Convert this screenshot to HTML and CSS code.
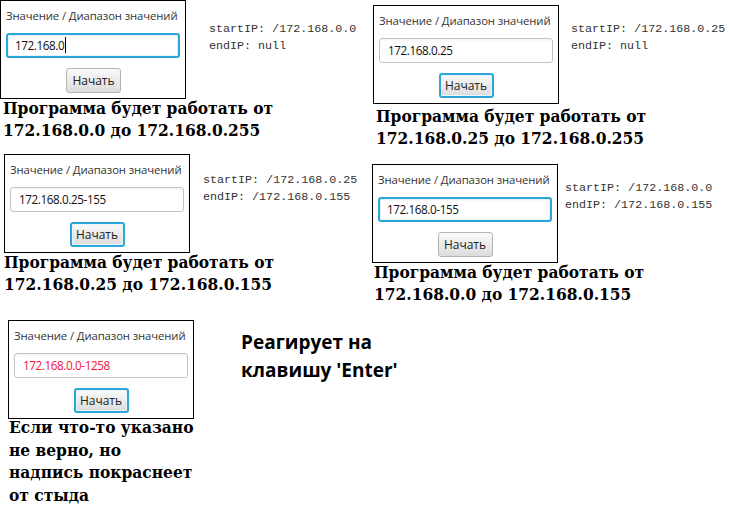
FILE: index.html
```html
<!DOCTYPE html>
<html lang="ru">
<head>
<meta charset="utf-8">
<title>IP range</title>
<link rel="stylesheet" href="styles.css">
</head>
<body>
<main class="canvas">

  <section class="shot s1">
    <div class="col">
      <div class="panel">
        <div class="label">Значение / Диапазон значений</div>
        <div class="field focused"><span class="caret">172.168.0</span></div>
        <div class="btn-row"><span class="btn">Начать</span></div>
      </div>
      <p class="caption">Программа будет работать от<br>172.168.0.0 до 172.168.0.255</p>
    </div>
    <pre class="log">startIP: /172.168.0.0
endIP: null</pre>
  </section>

  <section class="shot s2">
    <div class="col">
      <div class="panel">
        <div class="label">Значение / Диапазон значений</div>
        <div class="field">172.168.0.25</div>
        <div class="btn-row"><span class="btn focused">Начать</span></div>
      </div>
      <p class="caption">Программа будет работать от<br>172.168.0.25 до 172.168.0.255</p>
    </div>
    <pre class="log">startIP: /172.168.0.25
endIP: null</pre>
  </section>

  <section class="shot s3">
    <div class="col">
      <div class="panel">
        <div class="label">Значение / Диапазон значений</div>
        <div class="field">172.168.0.25-155</div>
        <div class="btn-row"><span class="btn focused">Начать</span></div>
      </div>
      <p class="caption">Программа будет работать от<br>172.168.0.25 до 172.168.0.155</p>
    </div>
    <pre class="log">startIP: /172.168.0.25
endIP: /172.168.0.155</pre>
  </section>

  <section class="shot s4">
    <div class="col">
      <div class="panel">
        <div class="label">Значение / Диапазон значений</div>
        <div class="field focused">172.168.0-155</div>
        <div class="btn-row"><span class="btn">Начать</span></div>
      </div>
      <p class="caption">Программа будет работать от<br>172.168.0.0 до 172.168.0.155</p>
    </div>
    <pre class="log">startIP: /172.168.0.0
endIP: /172.168.0.155</pre>
  </section>

  <section class="shot s5">
    <div class="col">
      <div class="panel">
        <div class="label">Значение / Диапазон значений</div>
        <div class="field error">172.168.0.0-1258</div>
        <div class="btn-row"><span class="btn focused">Начать</span></div>
      </div>
      <p class="caption">Если что-то указано<br>не верно, но<br>надпись покраснеет<br>от стыда</p>
    </div>
    <p class="note">Реагирует на<br>клавишу 'Enter'</p>
  </section>

</main>
</body>
</html>
```

FILE: styles.css
```css
* { box-sizing: border-box; }

html, body {
  margin: 0;
  padding: 0;
  background: #ffffff;
}

.canvas {
  position: relative;
  width: 731px;
  height: 511px;
  overflow: hidden;
}

/* collage: each snippet is placed where it sits on the sheet */
.shot {
  position: absolute;
  display: flex;
  align-items: flex-start;
}
.s1 { left: 0; top: 0; }
.s2 { left: 373px; top: 5px; }
.s3 { left: 4px; top: 154px; }
.s4 { left: 372px; top: 164px; }
.s5 { left: 8px; top: 320px; }

.col {
  width: 186px;
  flex: none;
}

.panel {
  width: 186px;
  height: 99px;
  border: 1px solid #000;
  background: #fff;
  padding: 7px 5px 0 5px;
  display: flex;
  flex-direction: column;
  font-family: "Open Sans", "Noto Sans", sans-serif;
}

.label {
  font-size: 11.3px;
  line-height: 16px;
  color: #333;
  white-space: nowrap;
  letter-spacing: -0.1px;
}

.field {
  margin-top: 9px;
  height: 25px;
  border: 1px solid #c4c4c4;
  border-radius: 3px;
  background: linear-gradient(#f4f4f4, #ffffff 3px);
  padding: 0 8px;
  font-size: 11.7px;
  line-height: 23px;
  color: #111;
  white-space: nowrap;
  letter-spacing: -0.4px;
}
.field.focused {
  border: 2px solid #2aa6d8;
  box-shadow: inset 0 0 0 1px #e4f3fa;
  line-height: 21px;
  padding: 0 7px;
}
.field.error { color: #f0143c; }

.caret {
  border-right: 1px solid #000;
  padding-right: 1px;
}

.btn-row {
  display: flex;
  justify-content: center;
  margin-top: 10px;
}
.btn {
  width: 55px;
  height: 25px;
  display: flex;
  align-items: center;
  justify-content: center;
  border: 1px solid #b4b4b4;
  border-radius: 3px;
  background: linear-gradient(#fafafa, #dcdcdc);
  font-size: 12px;
  color: #222;
}
.btn.focused {
  border: 2px solid #2aa6d8;
  box-shadow: inset 0 0 0 1px #e8f5fb;
}

.s1 .btn-row { padding-left: 1px; }

.caption {
  margin: -2px 0 0 0;
  padding-left: 3px;
  font-family: "DejaVu Serif", "Liberation Serif", serif;
  font-stretch: condensed;
  font-weight: bold;
  font-size: 17.2px;
  line-height: 22px;
  color: #000;
  white-space: nowrap;
}
.s2 .caption { margin-top: 1px; padding-left: 3px; }
.s3 .caption { padding-left: 0; }
.s4 .caption { padding-left: 2px; }
.s5 .caption { padding-left: 1px; line-height: 22.5px; margin-top: -3px; }

.log {
  margin: 21px 0 0 23px;
  font-family: "Liberation Mono", "Courier New", monospace;
  font-size: 11.7px;
  line-height: 17px;
  color: #333;
  white-space: pre;
}
.s2 .log { margin: 16px 0 0 12px; }
.s3 .log { margin: 18px 0 0 13px; }
.s4 .log { margin: 16px 0 0 7px; }

.note {
  margin: 8px 0 0 47px;
  font-family: "Open Sans", "Noto Sans", sans-serif;
  font-weight: bold;
  font-size: 19px;
  line-height: 28px;
  color: #000;
  white-space: nowrap;
}
```
